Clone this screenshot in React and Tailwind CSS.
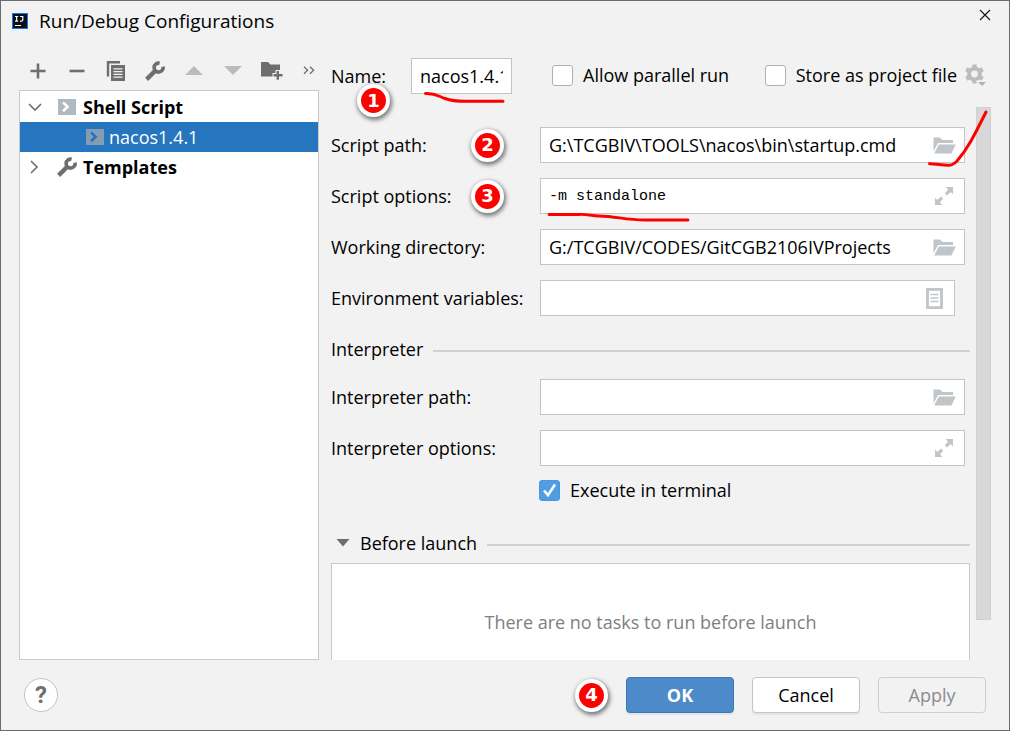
import React, { useState } from "react";
import clsx from "clsx";

const WrenchIcon = () => (
  <svg width="20" height="20" viewBox="0 0 20 20" fill="none" stroke="#6e6e6e">
    <path d="M1.6 18.4 L10.5 9.5" strokeWidth="4.4" />
    <path d="M14.6 2.2 A4.5 4.5 0 1 0 18 5.6" strokeWidth="3.6" />
  </svg>
);

const AddIcon = () => (
  <svg width="16" height="16" viewBox="0 0 16 16" stroke="#6e6e6e" strokeWidth="2.6">
    <path d="M8 0.5 V15.5 M0.5 8 H15.5" />
  </svg>
);

const RemoveIcon = () => (
  <svg width="16" height="16" viewBox="0 0 16 16" stroke="#6e6e6e" strokeWidth="2.6">
    <path d="M0.5 8 H15.5" />
  </svg>
);

const CopyIcon = () => (
  <svg width="20" height="20" viewBox="0 0 20 20" fill="none">
    <path d="M2 15.5 V1.2 H14" stroke="#6e6e6e" strokeWidth="2.4" />
    <path d="M5 4 H19 V20 H5 Z" fill="#6e6e6e" />
    <path d="M7.5 7.8 H16.5 M7.5 10.6 H16.5 M7.5 13.4 H16.5 M7.5 16.2 H16.5" stroke="#f2f2f2" strokeWidth="1.2" />
  </svg>
);

const UpIcon = () => (
  <svg width="18" height="9" viewBox="0 0 18 9" fill="#bcbcbc">
    <path d="M9 0 L18 9 H0 Z" />
  </svg>
);

const DownIcon = () => (
  <svg width="18" height="9" viewBox="0 0 18 9" fill="#bcbcbc">
    <path d="M0 0 H18 L9 9 Z" />
  </svg>
);

const NewFolderIcon = () => (
  <svg width="22" height="19" viewBox="0 0 22 19" fill="#6e6e6e">
    <path d="M0 1 H7 L9.5 3.6 H19 V9 H14.5 V12 H11.5 V15.5 H0 Z" />
    <path d="M15.6 10 H18 V13 H21.5 V15.4 H18 V18.8 H15.6 V15.4 H12.5 V13 H15.6 Z" />
  </svg>
);

const MoreIcon = () => (
  <svg width="12" height="9" viewBox="0 0 12 9" fill="none" stroke="#6e6e6e" strokeWidth="1.3">
    <path d="M1 0.8 L4.6 4.3 L1 7.8 M7 0.8 L10.6 4.3 L7 7.8" />
  </svg>
);

const ShellIcon = ({ selected }) => (
  <svg width="18" height="16" viewBox="0 0 18 16" fill="none">
    <path d="M0 0 H18 V16 H0 Z" fill={selected ? "#859db3" : "#afb9c0"} />
    <path d="M5 3.4 L9.6 7.8 L5 12.2" stroke={selected ? "#2675bf" : "#ffffff"} strokeWidth="2.6" />
  </svg>
);

const FolderIcon = () => (
  <svg width="23" height="17" viewBox="0 0 23 17" fill="#bfc5c9">
    <path d="M0.5 0.5 H7 L9.5 3 H20 V6 H5 L0.5 14.5 Z" />
    <path d="M5.8 7.4 H22.8 L18.4 16.5 H1.2 Z" />
  </svg>
);

const ExpandIcon = () => (
  <svg width="18" height="18" viewBox="0 0 18 18" fill="#bfc5c9">
    <path d="M10.5 0 H18 V7.5 L15.6 5.1 L12.1 8.4 L9.8 6.2 L13.1 2.6 Z" />
    <path d="M7.5 18 H0 V10.5 L2.4 12.9 L5.9 9.6 L8.2 11.8 L4.9 15.4 Z" />
  </svg>
);

const ListIcon = () => (
  <svg width="17" height="21" viewBox="0 0 17 21" fill="none" stroke="#bfc5c9">
    <path d="M1.5 1.3 H15.5 V19.7 H1.5 Z" strokeWidth="2.8" />
    <path d="M4.5 6.5 H12.5 M4.5 10 H12.5 M4.5 13.5 H12.5" strokeWidth="1.4" />
  </svg>
);

const GearIcon = () => (
  <svg width="22" height="22" viewBox="0 0 22 22" fill="none">
    <circle cx="9.5" cy="10" r="5.4" stroke="#bcbcbc" strokeWidth="4" />
    <path
      d="M9.5 0.5 V4 M9.5 16 V19.5 M1.3 5.2 L4.3 7 M14.7 13 L17.7 14.8 M1.3 14.8 L4.3 13 M14.7 7 L17.7 5.2"
      stroke="#bcbcbc"
      strokeWidth="4.4"
    />
    <path d="M10.5 16.6 H23 L17 23 Z" fill="#f2f2f2" />
    <path d="M13 18 H21 L17 22 Z" fill="#b0b0b0" />
  </svg>
);

const Badge = ({ children, className }) => (
  <span
    className={clsx(
      "flex size-[33px] shrink-0 items-center justify-center rounded-full border-4 border-white bg-[#ff0000] font-['DejaVu_Sans',sans-serif] text-lg leading-none font-bold text-white shadow-[1px_2px_4px_1px_rgba(0,0,0,0.5)]",
      className,
    )}
  >
    {children}
  </span>
);

const Checkbox = ({ label, defaultChecked }) => (
  <label className="flex items-center gap-2.5 whitespace-nowrap">
    <span className="relative flex size-[21px] shrink-0">
      <input
        type="checkbox"
        defaultChecked={defaultChecked}
        className="peer size-full appearance-none rounded-[3px] border border-[#b0b0b0] bg-white checked:border-[#4b97d9] checked:bg-[#4f9ee3]"
      />
      <svg
        viewBox="0 0 21 21"
        fill="none"
        className="pointer-events-none absolute inset-0 hidden size-full peer-checked:block"
      >
        <path d="M5 10.5 L9 15.2 L16 4.5" stroke="#ffffff" strokeWidth="2.6" />
      </svg>
    </span>
    {label}
  </label>
);

const Field = ({ id, label, value, icon, iconLabel, badge, mono, narrow, children }) => (
  <div className="flex h-9 items-center">
    <div className="flex w-[209px] shrink-0 items-center justify-between pr-9">
      <label htmlFor={id} className="whitespace-nowrap">
        {label}
      </label>
      {badge && <Badge>{badge}</Badge>}
    </div>
    <div
      className={clsx(
        "relative flex h-full min-w-0 flex-1 items-center border border-[#c4c4c4] bg-white pr-2",
        narrow ? "mr-[15px]" : "mr-[5px]",
      )}
    >
      <input
        id={id}
        type="text"
        defaultValue={value}
        className={clsx(
          "h-full min-w-0 flex-1 pl-2 outline-none",
          mono && "font-['Liberation_Mono',monospace] text-[15px]",
        )}
      />
      <button type="button" aria-label={iconLabel} className="flex w-6 justify-center">
        {icon}
      </button>
      {children}
    </div>
  </div>
);

const toolbar = [
  { name: "Add", icon: <AddIcon /> },
  { name: "Remove", icon: <RemoveIcon /> },
  { name: "Copy", icon: <CopyIcon /> },
  { name: "Edit templates", icon: <WrenchIcon /> },
  { name: "Move up", icon: <UpIcon /> },
  { name: "Move down", icon: <DownIcon /> },
  { name: "New folder", icon: <NewFolderIcon /> },
];

const Sidebar = () => {
  const [open, setOpen] = useState(true);

  return (
    <aside className="flex w-[300px] shrink-0 flex-col">
      <div className="flex h-[49px] items-center pt-2.5">
        {toolbar.map((item) => (
          <button
            key={item.name}
            type="button"
            aria-label={item.name}
            className="flex h-8 w-[39px] items-center justify-center pr-px"
          >
            {item.icon}
          </button>
        ))}
        <button type="button" aria-label="More" className="ml-auto pr-1">
          <MoreIcon />
        </button>
      </div>
      <div className="flex flex-1 flex-col border border-[#c9c9c9] bg-white pt-px">
        <button
          type="button"
          onClick={() => setOpen(!open)}
          className="flex h-[30px] items-center pl-2 font-bold"
        >
          <svg width="14" height="14" viewBox="0 0 14 14" fill="none" stroke="#6e6e6e" strokeWidth="1.6">
            <path d="M1 4 L7 10 L13 4" />
          </svg>
          <span className="flex w-[41px] justify-end pr-[7px]">
            <ShellIcon />
          </span>
          Shell Script
        </button>
        {open && (
          <button
            type="button"
            className="flex h-[30px] items-center gap-[5px] bg-[#2675bf] pl-[66px] text-white"
          >
            <ShellIcon selected />
            nacos1.4.1
          </button>
        )}
        <button type="button" className="flex h-[30px] items-center pl-2 font-bold">
          <svg width="14" height="14" viewBox="0 0 14 14" fill="none" stroke="#6e6e6e" strokeWidth="1.6">
            <path d="M3 1 L9 7 L3 13" />
          </svg>
          <span className="flex w-[41px] justify-end pr-1.5">
            <WrenchIcon />
          </span>
          Templates
        </button>
      </div>
    </aside>
  );
};

const NameRow = () => (
  <div className="flex h-9 items-center pr-1">
    <div className="relative w-20 shrink-0">
      <label htmlFor="name">Name:</label>
      <Badge className="absolute top-5 left-[26px] z-10">1</Badge>
    </div>
    <div className="relative h-full w-[101px] shrink-0">
      <input
        id="name"
        type="text"
        defaultValue="nacos1.4.1"
        className="size-full border border-[#c4c4c4] bg-white px-2 outline-none"
      />
      <svg width="101" height="48" viewBox="0 0 101 48" className="pointer-events-none absolute top-0 left-0">
        <path
          d="M14.5 35.5 C24 35 27 38 34 40.5 C41 43 46 43.3 54 43.3 H92"
          fill="none"
          stroke="#ff0000"
          strokeWidth="3"
          strokeLinecap="round"
        />
      </svg>
    </div>
    <div className="flex flex-1 items-center pb-0.5 pl-10">
      <Checkbox label="Allow parallel run" />
      <div className="ml-auto flex items-center gap-2">
        <Checkbox label="Store as project file" />
        <button type="button" aria-label="Storage options">
          <GearIcon />
        </button>
      </div>
    </div>
  </div>
);

const Form = () => (
  <div className="flex min-w-0 flex-1 flex-col pt-5">
    <div className="flex flex-col gap-[15px]">
      <Field
        id="path"
        label="Script path:"
        badge="2"
        value="G:\TCGBIV\TOOLS\nacos\bin\startup.cmd"
        icon={<FolderIcon />}
        iconLabel="Browse script"
      >
        <svg
          width="66"
          height="62"
          viewBox="0 0 66 62"
          className="pointer-events-none absolute -top-5 -right-6 z-10"
        >
          <path
            d="M7.5 55.7 C14 56 20 57 26 57.3 C30 57.5 32 56 35 53 C42 45 45 40 49 33 C54 24 60 12 64 4"
            fill="none"
            stroke="#ff0000"
            strokeWidth="3"
            strokeLinecap="round"
          />
        </svg>
      </Field>
      <Field
        id="options"
        label="Script options:"
        badge="3"
        value="-m standalone"
        mono
        icon={<ExpandIcon />}
        iconLabel="Expand script options"
      >
        <svg width="152" height="46" viewBox="0 0 152 46" className="pointer-events-none absolute top-0 left-0 z-10">
          <path
            d="M8 35.5 H38 C46 35 50 37 58 37 C76 37.5 84 41 104 41 H147"
            fill="none"
            stroke="#ff0000"
            strokeWidth="2.8"
            strokeLinecap="round"
          />
        </svg>
      </Field>
      <Field
        id="workdir"
        label="Working directory:"
        value="G:/TCGBIV/CODES/GitCGB2106IVProjects"
        icon={<FolderIcon />}
        iconLabel="Browse directory"
      />
      <Field
        id="env"
        label="Environment variables:"
        value=""
        narrow
        icon={<ListIcon />}
        iconLabel="Edit variables"
      />
    </div>
    <div className="mt-[21px] flex h-6 items-center gap-2.5">
      <h2>Interpreter</h2>
      <hr className="mt-1 flex-1 border-t-2 border-[#d1d1d1]" />
    </div>
    <div className="mt-[18px] flex flex-col gap-[15px]">
      <Field
        id="interpreter"
        label="Interpreter path:"
        value=""
        icon={<FolderIcon />}
        iconLabel="Browse interpreter"
      />
      <Field
        id="interpreter-options"
        label="Interpreter options:"
        value=""
        icon={<ExpandIcon />}
        iconLabel="Expand interpreter options"
      />
    </div>
    <div className="mt-3 flex h-6 items-center pl-[208px]">
      <Checkbox label="Execute in terminal" defaultChecked />
    </div>
    <div className="mt-[29px] flex h-6 items-center gap-2.5 pl-[5px]">
      <button type="button" className="flex items-center gap-2.5">
        <svg width="14" height="8" viewBox="0 0 14 8" fill="#6e6e6e">
          <path d="M0.5 0 H13.5 L7 7.5 Z" />
        </svg>
        Before launch
      </button>
      <hr className="mt-1 flex-1 border-t-2 border-[#d1d1d1]" />
    </div>
    <div className="mt-2 flex flex-1 items-center justify-center border border-b-0 border-[#c9c9c9] bg-white pt-5 text-[#808080]">
      There are no tasks to run before launch
    </div>
  </div>
);

const Footer = () => (
  <footer className="flex h-[70px] items-center gap-[18px] px-[23px]">
    <button
      type="button"
      aria-label="Help"
      className="flex size-[34px] items-center justify-center rounded-full border border-[#c4c4c4] bg-white font-[Roboto,sans-serif] text-2xl leading-none font-bold text-[#6e6e6e]"
    >
      ?
    </button>
    <Badge className="ml-auto">4</Badge>
    <button
      type="button"
      className="h-9 w-[108px] rounded border border-[#3b78b9] bg-[#4d8ac9] font-bold text-white shadow-[0_2px_0_#e4e4e4]"
    >
      OK
    </button>
    <button
      type="button"
      className="h-9 w-[108px] rounded border border-[#c4c4c4] bg-white shadow-[0_2px_0_#e4e4e4]"
    >
      Cancel
    </button>
    <button
      type="button"
      disabled
      className="h-9 w-[108px] rounded border border-[#cfcfcf] text-[#8c8c8c]"
    >
      Apply
    </button>
  </footer>
);

const App = () => {
  return (
    <div className="flex min-h-screen flex-col border border-[#6b6b6b] bg-[#f2f2f2] font-['Open_Sans',sans-serif] text-lg leading-6 text-black">
      <header className="flex h-10 items-center pr-[18px] pl-[11px]">
        <svg width="16" height="16" viewBox="0 0 16 16">
          <path d="M0 0 H16 V16 H0 Z" fill="#087cfa" />
          <path d="M1 1 H15 V15 H1 Z" fill="#0d0d12" />
          <path
            d="M3 3.5 H6.2 M4.6 3.5 V8.2 M3 8.2 H6.2 M8 3.5 H10.8 V7 Q10.8 8.2 9.4 8.2 H8 M3 12.5 H9"
            fill="none"
            stroke="#ffffff"
            strokeWidth="1.2"
          />
        </svg>
        <h1 className="ml-[11px] text-[19px]">Run/Debug Configurations</h1>
        <button type="button" aria-label="Close" className="mb-3 ml-auto">
          <svg width="12" height="12" viewBox="0 0 12 12" stroke="#1a1a1a" strokeWidth="1.2">
            <path d="M1 1 L11 11 M11 1 L1 11" />
          </svg>
        </button>
      </header>
      <div className="flex flex-1 gap-3 px-[18px]">
        <Sidebar />
        <main className="flex min-w-0 flex-1 flex-col pt-[17px]">
          <NameRow />
          <div className="mt-[13px] flex flex-1 gap-1.5">
            <Form />
            <div className="mb-10 w-[15px] border border-[#d0d0d0] bg-[#d8d8d8]" />
          </div>
        </main>
      </div>
      <Footer />
    </div>
  );
};

export default App;
